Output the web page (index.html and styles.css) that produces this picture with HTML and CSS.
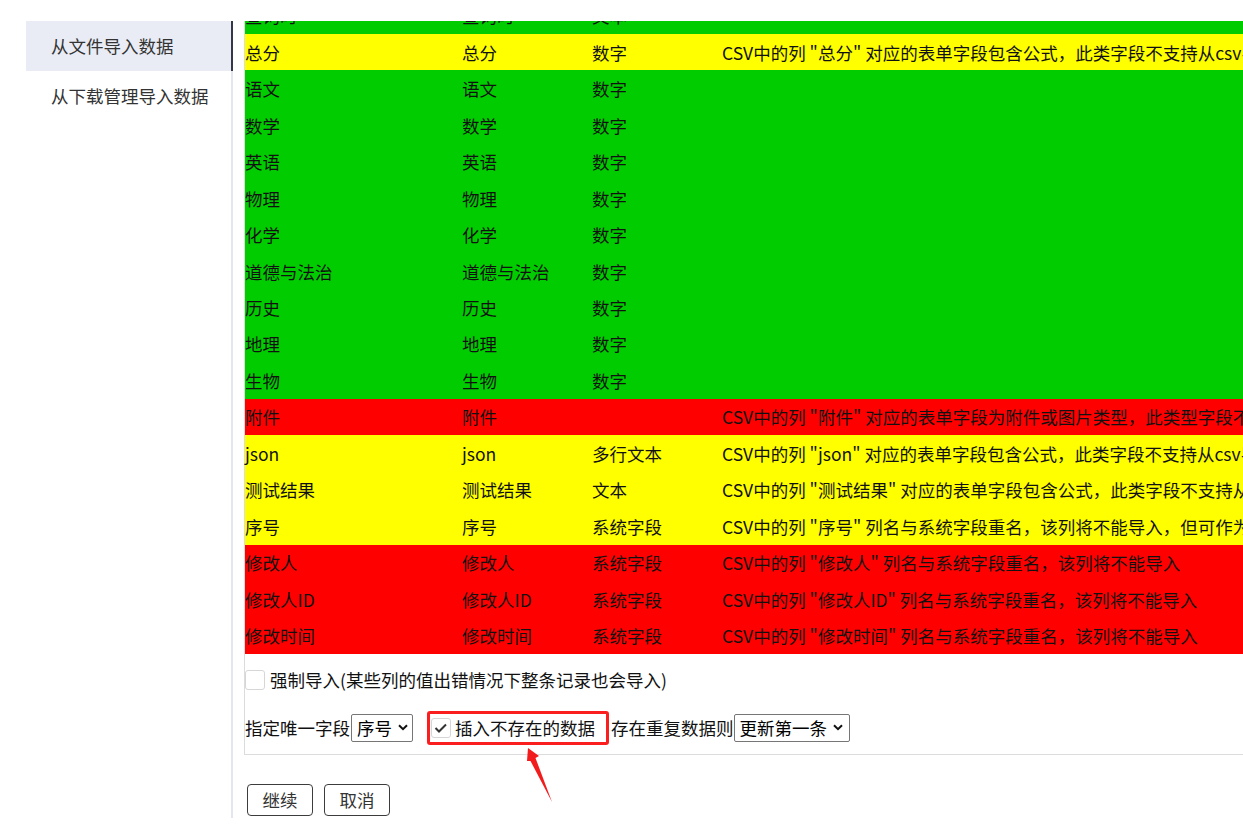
FILE: index.html
```html
<!DOCTYPE html>
<html lang="zh">
<head>
<meta charset="utf-8">
<title>导入数据</title>
<link rel="stylesheet" href="styles.css">
</head>
<body>
<div class="page">
  <nav class="sidebar">
    <div class="nav-item active">从文件导入数据</div>
    <div class="nav-item">从下载管理导入数据</div>
  </nav>
  <main class="main">
    <div class="box">
      <table class="map">
        <tr class="g"><td>查询时</td><td>查询时</td><td>文本</td><td></td></tr>
        <tr class="y"><td>总分</td><td>总分</td><td>数字</td><td>CSV中的列 "总分" 对应的表单字段包含公式，此类字段不支持从csv导入</td></tr>
        <tr class="g"><td>语文</td><td>语文</td><td>数字</td><td></td></tr>
        <tr class="g"><td>数学</td><td>数学</td><td>数字</td><td></td></tr>
        <tr class="g"><td>英语</td><td>英语</td><td>数字</td><td></td></tr>
        <tr class="g"><td>物理</td><td>物理</td><td>数字</td><td></td></tr>
        <tr class="g"><td>化学</td><td>化学</td><td>数字</td><td></td></tr>
        <tr class="g"><td>道德与法治</td><td>道德与法治</td><td>数字</td><td></td></tr>
        <tr class="g"><td>历史</td><td>历史</td><td>数字</td><td></td></tr>
        <tr class="g"><td>地理</td><td>地理</td><td>数字</td><td></td></tr>
        <tr class="g"><td>生物</td><td>生物</td><td>数字</td><td></td></tr>
        <tr class="r"><td>附件</td><td>附件</td><td></td><td>CSV中的列 "附件" 对应的表单字段为附件或图片类型，此类型字段不支持导入</td></tr>
        <tr class="y"><td>json</td><td>json</td><td>多行文本</td><td>CSV中的列 "json" 对应的表单字段包含公式，此类字段不支持从csv导入</td></tr>
        <tr class="y"><td>测试结果</td><td>测试结果</td><td>文本</td><td>CSV中的列 "测试结果" 对应的表单字段包含公式，此类字段不支持从csv导入</td></tr>
        <tr class="y"><td>序号</td><td>序号</td><td>系统字段</td><td>CSV中的列 "序号" 列名与系统字段重名，该列将不能导入，但可作为唯一字段</td></tr>
        <tr class="r"><td>修改人</td><td>修改人</td><td>系统字段</td><td>CSV中的列 "修改人" 列名与系统字段重名，该列将不能导入</td></tr>
        <tr class="r"><td>修改人ID</td><td>修改人ID</td><td>系统字段</td><td>CSV中的列 "修改人ID" 列名与系统字段重名，该列将不能导入</td></tr>
        <tr class="r"><td>修改时间</td><td>修改时间</td><td>系统字段</td><td>CSV中的列 "修改时间" 列名与系统字段重名，该列将不能导入</td></tr>
      </table>
      <div class="opt opt-force">
        <span class="check"></span>
        <span>强制导入(某些列的值出错情况下整条记录也会导入)</span>
      </div>
      <div class="opt opt-unique">
        <span>指定唯一字段</span>
        <div class="select sel-1"><span>序号</span><svg class="chev" width="10" height="7" viewBox="0 0 10 7"><polyline points="1,1.2 5,5.2 9,1.2" fill="none" stroke="#111" stroke-width="2"/></svg></div>
        <div class="highlight">
          <span class="check checked"><svg width="18" height="18" viewBox="0 0 18 18"><polyline points="3.5,9 7,12.5 14,5.5" fill="none" stroke="#333" stroke-width="2"/></svg></span>
          <span>插入不存在的数据</span>
        </div>
        <span class="dup">存在重复数据则</span>
        <div class="select sel-2"><span>更新第一条</span><svg class="chev" width="10" height="7" viewBox="0 0 10 7"><polyline points="1,1.2 5,5.2 9,1.2" fill="none" stroke="#111" stroke-width="2"/></svg></div>
      </div>
    </div>
    <div class="actions">
      <button class="btn">继续</button>
      <button class="btn">取消</button>
    </div>
  </main>
  <svg class="arrow" width="40" height="62" viewBox="0 0 40 62"><polygon points="8,0 19,8 15.5,10 32,54 10.5,13 7,13" fill="#f31c1c"/></svg>
</div>
</body>
</html>
```
FILE: styles.css
```css
html, body {
  margin: 0;
  padding: 0;
  background: #fff;
}
body {
  font-family: "Noto Sans CJK SC", "Microsoft YaHei", sans-serif;
  font-size: 17.5px;
  color: #111;
  overflow: hidden;
  width: 1243px;
  height: 829px;
}
.page {
  position: relative;
  display: flex;
  align-items: stretch;
  padding-top: 21px;
}
.sidebar {
  flex: 0 0 205px;
  margin-left: 26px;
  border-right: 2px solid #e3e6ee;
  background: #fff;
}
.nav-item {
  height: 50px;
  line-height: 50px;
  padding-left: 25px;
  color: #333;
  white-space: nowrap;
}
.nav-item.active {
  background: #e9ecf5;
  margin-right: -2px;
  border-right: 2px solid #333746;
}
.main {
  flex: 1;
  min-width: 0;
  overflow: hidden;
  padding-left: 11px;
  padding-bottom: 2px;
}
.box {
  width: max-content;
  min-width: 1100px;
  margin-top: -24.5px;
  border: 1px solid #dcdcdc;
  padding-bottom: 9px;
}
.map {
  border-collapse: collapse;
  border-spacing: 0;
}
.map tr {
  height: 36.47px;
}
.map td {
  padding: 0;
  white-space: nowrap;
  vertical-align: middle;
  line-height: 1.2;
}
.map td:nth-child(1) { width: 217px; }
.map td:nth-child(2) { width: 130px; }
.map td:nth-child(3) { width: 130px; }
.map td:nth-child(4) { padding-right: 40px; }
.g { background: #00cc00; }
.y { background: #ffff00; }
.r { background: #ff0000; }
.opt {
  display: flex;
  align-items: center;
  white-space: nowrap;
}
.opt-force {
  margin-top: 16px;
  height: 20px;
  gap: 5px;
}
.opt-unique {
  margin-top: 21px;
  height: 34px;
}
.check {
  box-sizing: border-box;
  width: 20px;
  height: 20px;
  border: 1px solid #d6d6d6;
  border-radius: 3px;
  background: #fff;
  display: inline-flex;
  align-items: center;
  justify-content: center;
  flex: none;
}
.select {
  box-sizing: border-box;
  height: 28px;
  border: 1px solid #767676;
  border-radius: 2px;
  display: flex;
  align-items: center;
  gap: 6px;
  padding: 0 5px 0 5px;
  background: #fff;
  color: #000;
}
.sel-1 { width: 62px; margin-left: 1px; }
.sel-2 { width: 116px; }
.chev { flex: none; }
.highlight {
  box-sizing: border-box;
  height: 34px;
  width: 182px;
  margin-left: 14px;
  border: 3px solid #fb1e1e;
  border-radius: 3px;
  display: flex;
  align-items: center;
  gap: 4px;
  padding-left: 1px;
}
.dup {
  margin-left: 2px;
}
.actions {
  display: flex;
  gap: 11px;
  margin-top: 29px;
  margin-left: 3px;
}
.btn {
  box-sizing: border-box;
  width: 66px;
  height: 32px;
  padding: 0;
  border: 1px solid #3c3c3c;
  border-radius: 4px;
  background: #fff;
  color: #333;
  font-family: inherit;
  font-size: 17.5px;
  line-height: 1;
}
.arrow {
  position: absolute;
  left: 520px;
  top: 748px;
}
```
